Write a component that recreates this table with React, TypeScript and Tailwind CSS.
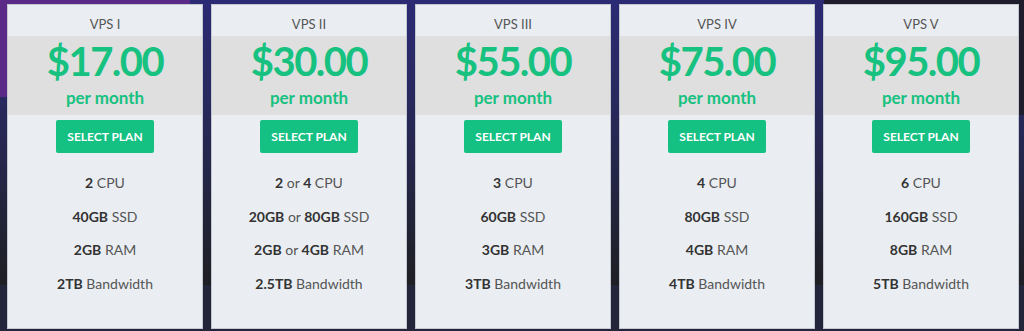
const plans = [
  {
    name: "VPS I",
    price: "$17.00",
    features: [
      [["2", true], [" CPU", false]],
      [["40GB", true], [" SSD", false]],
      [["2GB", true], [" RAM", false]],
      [["2TB", true], [" Bandwidth", false]],
    ],
  },
  {
    name: "VPS II",
    price: "$30.00",
    features: [
      [["2", true], [" or ", false], ["4", true], [" CPU", false]],
      [["20GB", true], [" or ", false], ["80GB", true], [" SSD", false]],
      [["2GB", true], [" or ", false], ["4GB", true], [" RAM", false]],
      [["2.5TB", true], [" Bandwidth", false]],
    ],
  },
  {
    name: "VPS III",
    price: "$55.00",
    features: [
      [["3", true], [" CPU", false]],
      [["60GB", true], [" SSD", false]],
      [["3GB", true], [" RAM", false]],
      [["3TB", true], [" Bandwidth", false]],
    ],
  },
  {
    name: "VPS IV",
    price: "$75.00",
    features: [
      [["4", true], [" CPU", false]],
      [["80GB", true], [" SSD", false]],
      [["4GB", true], [" RAM", false]],
      [["4TB", true], [" Bandwidth", false]],
    ],
  },
  {
    name: "VPS V",
    price: "$95.00",
    features: [
      [["6", true], [" CPU", false]],
      [["160GB", true], [" SSD", false]],
      [["8GB", true], [" RAM", false]],
      [["5TB", true], [" Bandwidth", false]],
    ],
  },
] as { name: string; price: string; features: [string, boolean][][] }[];

function PlanCard({ plan }: { plan: (typeof plans)[number] }) {
  return (
    <div className="w-[196px] h-[325px] flex flex-col items-center bg-[#eaeef2] border border-[#c3c7d0]">
      <div className="h-[31px] pt-[11px] text-[13px] leading-[16px] text-[#555]">{plan.name}</div>
      <div className="w-full h-[79px] bg-[#dfdfdf] flex flex-col items-center">
        <div className="mt-[2px] h-[46px] text-[40px] leading-[46px] font-bold tracking-[-1.5px] text-[#17c17f]">
          {plan.price}
        </div>
        <div className="mt-[3px] text-[17px] leading-[22px] font-bold text-[#17c17f]">per month</div>
      </div>
      <button className="mt-[5px] w-[98px] h-[33px] rounded-[2px] bg-[#15c083] text-white text-[12px] font-bold">
        SELECT PLAN
      </button>
      <ul className="mt-[13px] flex flex-col items-center">
        {plan.features.map((row, i) => (
          <li key={i} className="h-[33.5px] leading-[33.5px] text-[14px] text-[#555]">
            {row.map(([t, b], j) => (
              <span key={j} className={b ? "font-bold text-[#333]" : ""}>
                {t}
              </span>
            ))}
          </li>
        ))}
      </ul>
    </div>
  );
}

export default function App() {
  return (
    <div className="relative w-[1024px] h-[331px] overflow-hidden bg-[linear-gradient(180deg,#2b2a74_0%,#28295e_30%,#23253f_60%,#1f1f24_86%,#23253a_86%,#23253a_100%)] font-['Lato','Noto_Sans',sans-serif]">
      <div className="absolute left-0 top-0 w-[190px] h-[97px] bg-[#5a2a86]" />
      <div className="absolute right-0 top-0 w-[200px] h-[115px] bg-[#1f1d2b]" />
      <div className="relative flex gap-[8px] pl-[7px] pt-[4px]">
        {plans.map((p) => (
          <PlanCard key={p.name} plan={p} />
        ))}
      </div>
    </div>
  );
}
